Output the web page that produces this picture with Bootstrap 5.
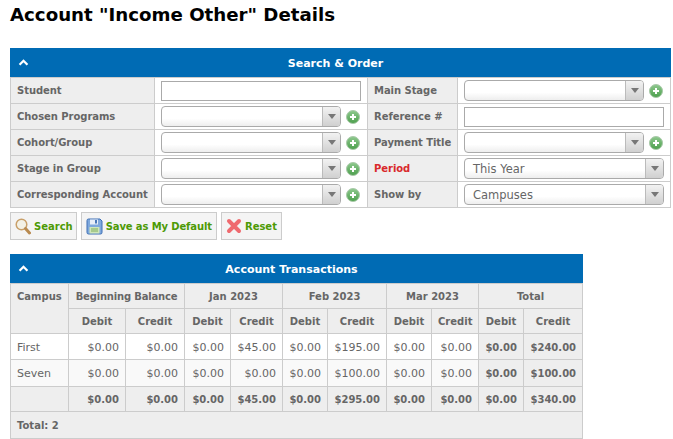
<!DOCTYPE html>
<html lang="en"><head><meta charset="utf-8"><title>Account Details</title>
<link href="https://cdn.jsdelivr.net/npm/bootstrap@5.3.0/dist/css/bootstrap.min.css" rel="stylesheet">
<style>
html,body{background:#fff;}
body{font-family:"DejaVu Sans",sans-serif;font-size:11px;line-height:14px;color:#666;margin:0;padding:0;overflow:hidden;}
.page-wrap{padding:0 2px 0 10px;}
h1.page-title{font-family:"DejaVu Sans",sans-serif;font-size:18.200px;font-weight:700;color:#000;line-height:20px;margin:0;padding:5px 0 0 0;height:48px;}
.blue-head{background:#006bb4;color:#fff;font-weight:700;text-align:center;height:29px;line-height:31px;padding-right:10px;position:relative;}
.chev{position:absolute;left:8px;top:11px;width:11px;height:7px;}
table.grid{border-collapse:collapse;table-layout:fixed;width:660px;margin:0;}
table.grid td,table.grid th{border:1px solid #ccc;padding:0 6px;height:26px;vertical-align:middle;font-size:10px;line-height:14px;}
table.grid td.lbl{background:#eee;font-weight:700;color:#666;white-space:nowrap;letter-spacing:-.05px;}
table.grid td.lbl.req{color:#d9292b;}
table.grid td.val{background:#fff;padding:0 6px;}
.w1{width:144px}.w2{width:213px}.w3{width:90px}.w4{width:213px}
.fld{display:flex;align-items:center;gap:5px;}
.text-in{display:block;width:200px;height:20px;border:1px solid #aaa;background:#fff;padding:0;border-radius:0;}
.text-in:focus{outline:0;}
.combo{display:flex;height:21px;border:1px solid #aaa;border-radius:4px;overflow:hidden;background:linear-gradient(#fff 60%,#eee);width:180px;color:#666;font-size:11.500px;line-height:20px;}
.combo.wide{width:200px;}
.combo-text{flex:1 1 auto;padding-left:8px;}
.combo-arrow{flex:0 0 18px;border-left:1px solid #bbb;background:linear-gradient(#f2f2f2,#d0d0d0);display:flex;align-items:center;justify-content:center;}
.tri{width:0;height:0;border-left:4px solid transparent;border-right:4px solid transparent;border-top:5px solid #777;}
.plus-ic{width:14px;height:14px;flex:0 0 14px;display:block;}
.btn-row{display:flex;gap:4px;padding-top:4px;height:46px;align-items:flex-start;}
.act-btn{display:flex;align-items:center;height:28px;border:1px solid #ccc;background:#f4f4f4;border-radius:0;color:#4d9a05;font-size:10px;font-weight:700;padding:0 4px;gap:3px;}
.act-btn:hover{background:#f4f4f4;color:#4d9a05;border-color:#ccc;}
.act-btn svg{flex:0 0 auto;display:block;}
.act-first{padding-right:3px;}
.act-tight{letter-spacing:-.12px;}
.tbl-wrap{width:573px;}
table.tx{border-collapse:collapse;table-layout:fixed;width:572px;margin:0;}
table.tx th,table.tx td{border:1px solid #ccc;padding:2px 6px 0;font-size:11px;line-height:14px;vertical-align:middle;color:#666;white-space:nowrap;}
table.tx th{background:#eee;font-weight:700;text-align:center;font-size:10px;}
table.tx th.tl{text-align:left;padding-left:6px;vertical-align:top;padding-top:6px;}
table.tx th.th-tight{letter-spacing:-.18px;}
table.tx .r1{height:25px}table.tx .r2{height:25px}table.tx .r3{height:26px}table.tx .r4{height:27px}table.tx .r5{height:25px}table.tx .r6{height:27px}
table.tx td{text-align:right;background:#fff;}
table.tx .r4 td{background:#f9f9f9;}
table.tx td.nm{text-align:left;padding-left:6px;}
table.tx td.tot,table.tx .r5 td{background:#eee;font-weight:700;font-size:10px;}
table.tx td.foot{background:#eee;font-weight:700;font-size:10px;text-align:left;padding-left:6px;}
.c1{width:58px}.c2{width:57px}.c3{width:59px}.c4{width:46px}.c5{width:52px}.c6{width:45px}.c7{width:59px}.c8{width:45px}.c9{width:47px}.c10{width:45px}.c11{width:59px}
</style></head><body>
<div class="page-wrap">
<h1 class="page-title">Account "Income Other" Details</h1>

<div class="blue-head"><svg class="chev" viewBox="0 0 12 8"><path d="M1.500 6.500 6 2l4.500 4.500" fill="none" stroke="#fff" stroke-width="2.600"/></svg>Search &amp; Order</div>
<table class="grid">
<colgroup><col class="w1"><col class="w2"><col class="w3"><col class="w4"></colgroup>
<tbody>
<tr><td class="lbl">Student</td><td class="val"><input class="text-in" type="text" aria-label="Student"></td><td class="lbl">Main Stage</td><td class="val"><div class="fld"><div class="combo"><span class="combo-text"></span><span class="combo-arrow"><i class="tri"></i></span></div><svg class="plus-ic" viewBox="0 0 14 14"><defs><linearGradient id="pg" x1="0" y1="0" x2="0" y2="1"><stop offset="0" stop-color="#8fc98f"/><stop offset="1" stop-color="#4c9f4c"/></linearGradient></defs><circle cx="7" cy="7" r="6.500" fill="url(#pg)" stroke="#a9c9a9"/><path d="M7 4v6M4 7h6" stroke="#fff" stroke-width="2"/></svg></div></td></tr>
<tr><td class="lbl">Chosen Programs</td><td class="val"><div class="fld"><div class="combo"><span class="combo-text"></span><span class="combo-arrow"><i class="tri"></i></span></div><svg class="plus-ic" viewBox="0 0 14 14"><circle cx="7" cy="7" r="6.500" fill="url(#pg)" stroke="#a9c9a9"/><path d="M7 4v6M4 7h6" stroke="#fff" stroke-width="2"/></svg></div></td><td class="lbl">Reference #</td><td class="val"><input class="text-in" type="text" aria-label="Reference"></td></tr>
<tr><td class="lbl">Cohort/Group</td><td class="val"><div class="fld"><div class="combo"><span class="combo-text"></span><span class="combo-arrow"><i class="tri"></i></span></div><svg class="plus-ic" viewBox="0 0 14 14"><circle cx="7" cy="7" r="6.500" fill="url(#pg)" stroke="#a9c9a9"/><path d="M7 4v6M4 7h6" stroke="#fff" stroke-width="2"/></svg></div></td><td class="lbl">Payment Title</td><td class="val"><div class="fld"><div class="combo"><span class="combo-text"></span><span class="combo-arrow"><i class="tri"></i></span></div><svg class="plus-ic" viewBox="0 0 14 14"><circle cx="7" cy="7" r="6.500" fill="url(#pg)" stroke="#a9c9a9"/><path d="M7 4v6M4 7h6" stroke="#fff" stroke-width="2"/></svg></div></td></tr>
<tr><td class="lbl">Stage in Group</td><td class="val"><div class="fld"><div class="combo"><span class="combo-text"></span><span class="combo-arrow"><i class="tri"></i></span></div><svg class="plus-ic" viewBox="0 0 14 14"><circle cx="7" cy="7" r="6.500" fill="url(#pg)" stroke="#a9c9a9"/><path d="M7 4v6M4 7h6" stroke="#fff" stroke-width="2"/></svg></div></td><td class="lbl req">Period</td><td class="val"><div class="combo wide"><span class="combo-text">This Year</span><span class="combo-arrow"><i class="tri"></i></span></div></td></tr>
<tr><td class="lbl">Corresponding Account</td><td class="val"><div class="fld"><div class="combo"><span class="combo-text"></span><span class="combo-arrow"><i class="tri"></i></span></div><svg class="plus-ic" viewBox="0 0 14 14"><circle cx="7" cy="7" r="6.500" fill="url(#pg)" stroke="#a9c9a9"/><path d="M7 4v6M4 7h6" stroke="#fff" stroke-width="2"/></svg></div></td><td class="lbl">Show by</td><td class="val"><div class="combo wide"><span class="combo-text">Campuses</span><span class="combo-arrow"><i class="tri"></i></span></div></td></tr>
</tbody></table>

<div class="btn-row">
<button type="button" class="btn act-btn act-first"><svg width="16" height="17" viewBox="0 0 16 17"><circle cx="6.500" cy="6.500" r="5.300" fill="#f3f1e6" stroke="#c9a06a" stroke-width="1.500"/><path d="M10.500 10.500l4 4.500" stroke="#b98a50" stroke-width="3" stroke-linecap="round"/></svg>Search</button>
<button type="button" class="btn act-btn act-tight"><svg width="17" height="17" viewBox="0 0 17 17"><path d="M1 2.500Q1 1 2.500 1H14l2 2v11.500Q16 16 14.500 16h-12Q1 16 1 14.500z" fill="#7fa9dd" stroke="#3e6fb5"/><rect x="4" y="1.500" width="8" height="5" fill="#e8eef8"/><rect x="9" y="2" width="2" height="3.500" fill="#4a78b8"/><rect x="3.500" y="9" width="10" height="6.500" fill="#cfe6b8"/><path d="M5 11h7M5 13h7" stroke="#7fae60"/></svg>Save as My Default</button>
<button type="button" class="btn act-btn"><svg width="16" height="16" viewBox="0 0 16 16"><path d="M3 3l10 10M13 3L3 13" stroke="#ef6a6f" stroke-width="4" stroke-linecap="round"/></svg>Reset</button>
</div>

<div class="tbl-wrap">
<div class="blue-head"><svg class="chev" viewBox="0 0 12 8"><path d="M1.500 6.500 6 2l4.500 4.500" fill="none" stroke="#fff" stroke-width="2.600"/></svg>Account Transactions</div>
<table class="tx">
<colgroup><col class="c1"><col class="c2"><col class="c3"><col class="c4"><col class="c5"><col class="c6"><col class="c7"><col class="c8"><col class="c9"><col class="c10"><col class="c11"></colgroup>
<thead>
<tr class="r1"><th class="tl" rowspan="2">Campus</th><th class="th-tight" colspan="2">Beginning Balance</th><th colspan="2">Jan 2023</th><th colspan="2">Feb 2023</th><th colspan="2">Mar 2023</th><th colspan="2">Total</th></tr>
<tr class="r2"><th>Debit</th><th>Credit</th><th>Debit</th><th>Credit</th><th>Debit</th><th>Credit</th><th>Debit</th><th>Credit</th><th>Debit</th><th>Credit</th></tr>
</thead>
<tbody>
<tr class="r3"><td class="nm">First</td><td>$0.00</td><td>$0.00</td><td>$0.00</td><td>$45.00</td><td>$0.00</td><td>$195.00</td><td>$0.00</td><td>$0.00</td><td class="tot">$0.00</td><td class="tot">$240.00</td></tr>
<tr class="r4"><td class="nm">Seven</td><td>$0.00</td><td>$0.00</td><td>$0.00</td><td>$0.00</td><td>$0.00</td><td>$100.00</td><td>$0.00</td><td>$0.00</td><td class="tot">$0.00</td><td class="tot">$100.00</td></tr>
<tr class="r5"><td></td><td>$0.00</td><td>$0.00</td><td>$0.00</td><td>$45.00</td><td>$0.00</td><td>$295.00</td><td>$0.00</td><td>$0.00</td><td>$0.00</td><td>$340.00</td></tr>
<tr class="r6"><td class="foot" colspan="11">Total: 2</td></tr>
</tbody></table>
</div>
</div>
<script src="https://cdn.jsdelivr.net/npm/bootstrap@5.3.0/dist/js/bootstrap.bundle.min.js"></script>
</body></html>
